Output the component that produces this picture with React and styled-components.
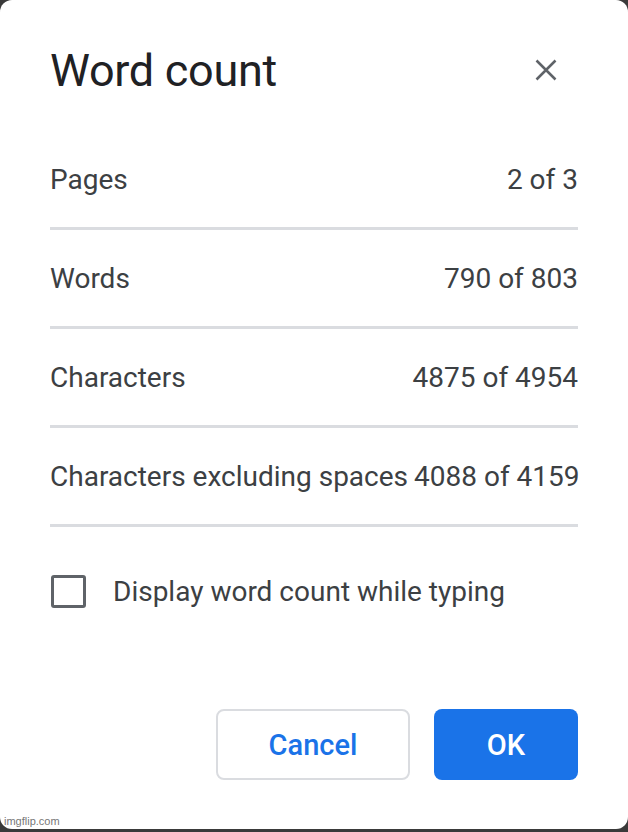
import React from 'react';
import styled, { createGlobalStyle, css } from 'styled-components';

const GlobalStyle = createGlobalStyle`
  html, body {
    margin: 0;
    padding: 0;
    background: #3a3a3a;
  }
  * {
    box-sizing: border-box;
  }
`;

const stats = [
  { label: 'Pages', value: '2 of 3' },
  { label: 'Words', value: '790 of 803' },
  { label: 'Characters', value: '4875 of 4954' },
  { label: 'Characters excluding spaces', value: '4088 of 4159' },
];

const StyledDialog = styled.div`
  position: relative;
  width: 628px;
  height: 829px;
  background: #fff;
  border-radius: 12px;
  padding: 0 50px;
  display: flex;
  flex-direction: column;
  font-family: Roboto, "Liberation Sans", sans-serif;
`;

const StyledHeader = styled.header`
  height: 131px;
  display: flex;
  align-items: center;
  justify-content: space-between;
  padding-top: 10px;
`;

const StyledTitle = styled.h1`
  margin: 0;
  font-size: 45px;
  font-weight: 400;
  color: #202124;
  letter-spacing: -0.3px;
`;

const StyledClose = styled.button`
  width: 44px;
  height: 44px;
  margin-right: 10px;
  margin-top: -2px;
  border: 0;
  background: none;
  padding: 0;
  display: flex;
  align-items: center;
  justify-content: center;
  cursor: pointer;
`;

const StyledList = styled.ul`
  margin: 0;
  padding: 0;
  list-style: none;
`;

const StyledRow = styled.li`
  height: 99px;
  display: flex;
  align-items: center;
  justify-content: space-between;
  gap: 6px;
  border-bottom: 3px solid #dadce0;
  font-size: 28px;
  color: #3c4043;
  white-space: nowrap;
`;

const StyledCheckRow = styled.label`
  margin-top: 48px;
  display: flex;
  align-items: center;
  gap: 27px;
  font-size: 28px;
  color: #3c4043;
  cursor: pointer;
`;

const StyledBox = styled.span`
  width: 35px;
  height: 33px;
  border: 3.5px solid #5f6368;
  border-radius: 3px;
  margin-left: 1px;
`;

const StyledFooter = styled.footer`
  margin-top: 101px;
  display: flex;
  justify-content: flex-end;
  gap: 24px;
`;

const StyledButton = styled.button`
  height: 71px;
  border-radius: 8px;
  font-family: Roboto, "Liberation Sans", sans-serif;
  font-size: 29px;
  font-weight: 500;
  cursor: pointer;
  ${props => props.primary
    ? css`
      width: 144px;
      background: #1a73e8;
      color: #fff;
      border: 0;
    `
    : css`
      width: 194px;
      background: #fff;
      color: #1a73e8;
      border: 2px solid #dadce0;
    `}
`;

const StyledWatermark = styled.span`
  position: absolute;
  left: 4px;
  bottom: 2px;
  font-family: "Liberation Sans", Arial, sans-serif;
  font-size: 11px;
  color: #777;
`;

const App = () => {
  return (
    <>
      <GlobalStyle />
      <StyledDialog>
        <StyledHeader>
          <StyledTitle>Word count</StyledTitle>
          <StyledClose aria-label="Close">
            <svg width="22" height="22" viewBox="0 0 22 22">
              <path d="M1.5 1.5 L20.5 20.5 M20.5 1.5 L1.5 20.5" stroke="#5f6368" strokeWidth="2.5" fill="none" />
            </svg>
          </StyledClose>
        </StyledHeader>
        <StyledList>
          {stats.map(({ label, value }) => (
            <StyledRow key={label}>
              <span>{label}</span>
              <span>{value}</span>
            </StyledRow>
          ))}
        </StyledList>
        <StyledCheckRow>
          <StyledBox />
          Display word count while typing
        </StyledCheckRow>
        <StyledFooter>
          <StyledButton>Cancel</StyledButton>
          <StyledButton primary>OK</StyledButton>
        </StyledFooter>
        <StyledWatermark>imgflip.com</StyledWatermark>
      </StyledDialog>
    </>
  );
};

export default App;
